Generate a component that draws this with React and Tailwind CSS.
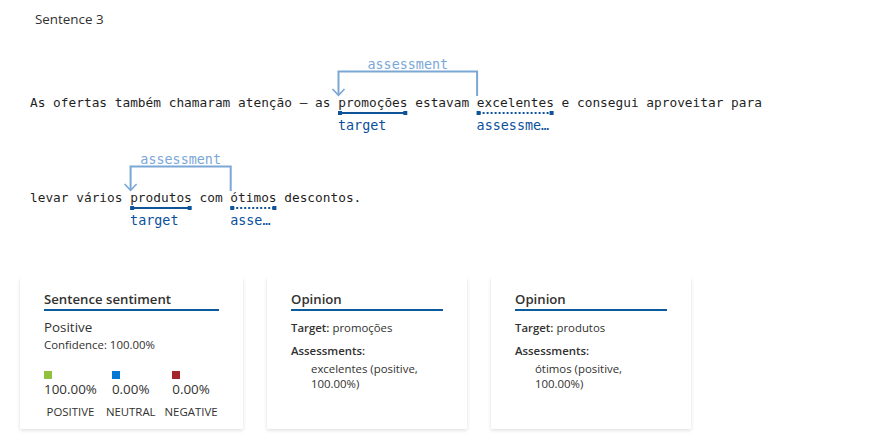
import React from 'react'

const CH = 7.7
const UI = { fontFamily: '"Open Sans", "Noto Sans", sans-serif' }
const MONO = { fontFamily: '"DejaVu Sans Mono", "Liberation Mono", monospace' }

const sentences = [
    {
        text: 'As ofertas também chamaram atenção — as promoções estavam excelentes e consegui aproveitar para',
        target: { start: 40, len: 9 },
        assessment: { start: 58, len: 10 },
    },
    {
        text: 'levar vários produtos com ótimos descontos.',
        target: { start: 13, len: 8 },
        assessment: { start: 26, len: 6 },
    },
]

function Underline({ start, len, dotted }) {
    const x1 = start * CH, x2 = (start + len) * CH
    return (
        <g fill="#0f5499" stroke="#0f5499">
            <line x1={x1 + 2} y1="60" x2={x2 - 2} y2="60" strokeWidth="2" strokeDasharray={dotted ? '2 2' : undefined} />
            <rect x={x1} y="58" width="4" height="4" stroke="none" />
            <rect x={x2 - 4} y="58" width="4" height="4" stroke="none" />
        </g>
    )
}

function SentenceRow({ text, target, assessment }) {
    const xt = target.start * CH + 0.5
    const xa = assessment.start * CH + 0.5
    const mid = (xt + xa) / 2
    return (
        <div className="relative h-[95px]">
            <svg className="absolute left-0 top-0" width="800" height="95">
                <path d={`M ${xa} 43 V 18.5 H ${xt} V 42`} fill="none" stroke="#7aa7d6" strokeWidth="2" />
                <path d={`M ${xt - 6} 36 L ${xt} 42.3 L ${xt + 6} 36`} fill="none" stroke="#7aa7d6" strokeWidth="1.6" />
                <Underline {...target} />
                <Underline {...assessment} dotted />
            </svg>
            <div className="absolute top-[4px] w-[120px] text-center text-[13.4px] leading-4 text-[#7aa7d6]"
                style={{ ...MONO, left: mid - 60 }}>assessment</div>
            <div className="pt-10 whitespace-pre text-[12.8px] leading-5 text-[#1f1f1f]" style={MONO}>{text}</div>
            <div className="absolute top-[65px] truncate text-[13.4px] leading-4 text-[#0a4f9c]"
                style={{ ...MONO, left: target.start * CH, width: target.len * CH + 1 }}>target</div>
            <div className="absolute top-[65px] truncate text-[13.4px] leading-4 text-[#0a4f9c]"
                style={{ ...MONO, left: assessment.start * CH, width: assessment.len * CH + 1 }}>assessment</div>
        </div>
    )
}

function Card({ title, width, children }) {
    return (
        <div className={`${width} bg-white px-6 pt-3 shadow-[0_1.6px_3.6px_rgba(0,0,0,0.13),0_0.3px_0.9px_rgba(0,0,0,0.11)]`}>
            <div className="border-b-2 border-[#0b5a9c] text-[13.2px] font-semibold leading-5 text-[#323130]">{title}</div>
            {children}
        </div>
    )
}

function Score({ color, value, label }) {
    return (
        <div className="flex flex-col items-center">
            <div className="flex flex-col items-start">
                <span className={`h-2 w-2 ${color}`} />
                <span className="text-[13.4px] leading-5">{value}</span>
            </div>
            <span className="mt-[5px] text-[11.4px] leading-4">{label}</span>
        </div>
    )
}

function Opinion({ target, assessment }) {
    return (
        <Card title="Opinion" width="w-[200px]">
            <div className="mt-[9px] text-[11.4px] leading-4 text-[#323130]">
                <div><span className="font-semibold">Target:</span> {target}</div>
                <div className="mt-[7px] font-semibold">Assessments:</div>
                <div className="mt-[2px] pl-5 leading-[15px]">
                    {assessment} (positive,<br />100.00%)
                </div>
            </div>
        </Card>
    )
}

export default function App() {
    return (
        <div className="h-[434px] w-[883px] overflow-hidden bg-white text-[#323130]" style={UI}>
            <div className="pl-[35px] pt-[9px] text-[13.4px] leading-5">Sentence 3</div>
            <div className="mt-[24px] pl-[30px]">
                {sentences.map((s, i) => <SentenceRow key={i} {...s} />)}
            </div>
            <div className="mt-[34px] flex h-[152px] gap-6 pl-5">
                <Card title="Sentence sentiment" width="w-[223px]">
                    <div className="mt-[6px] text-[13.4px] leading-5">Positive</div>
                    <div className="text-[11.4px] leading-4">Confidence: 100.00%</div>
                    <div className="mt-[18px] flex gap-[9px]">
                        <Score color="bg-[#93c13d]" value="100.00%" label="POSITIVE" />
                        <Score color="bg-[#0078d4]" value="0.00%" label="NEUTRAL" />
                        <Score color="bg-[#a4262c]" value="0.00%" label="NEGATIVE" />
                    </div>
                </Card>
                <Opinion target="promoções" assessment="excelentes" />
                <Opinion target="produtos" assessment="ótimos" />
            </div>
        </div>
    )
}
